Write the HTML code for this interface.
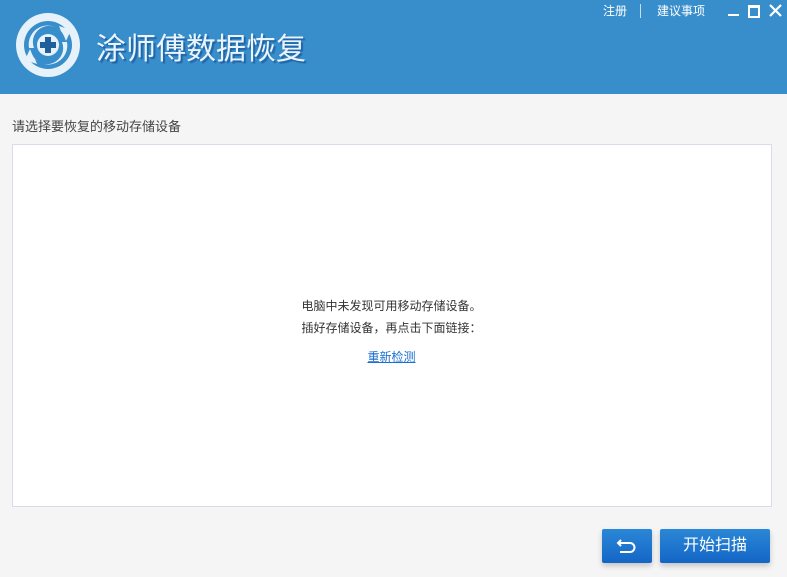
<!DOCTYPE html>
<html><head><meta charset="utf-8"><style>
body{margin:0;width:787px;height:577px;background:#f5f5f5;font-family:"Liberation Sans","Noto Sans CJK SC",sans-serif;position:relative;overflow:hidden}
.hd{position:absolute;left:0;top:0;width:787px;height:94px;background:#388dcb}
.t{position:absolute;left:96px;top:24px;font-size:30px;color:#eaf4fc;text-shadow:2px 2px 1px #2064a6;letter-spacing:0px}
.tr{position:absolute;top:2px;font-size:12px;color:#fff}
.lbl{position:absolute;left:12px;top:116px;font-size:13px;color:#444}
.panel{position:absolute;left:12px;top:144px;width:758px;height:361px;background:#fff;border:1px solid #d6dde8}
.msg{position:absolute;left:0;width:783px;text-align:center;font-size:12px;color:#333}
.btn{position:absolute;top:529px;height:34px;border-radius:2px;background:linear-gradient(#2a87d6,#1466c6);box-shadow:0 3px 6px rgba(0,0,0,.2);color:#fff}
</style></head><body>
<div class="hd">
<svg style="position:absolute;left:15px;top:12px" width="66" height="66" viewBox="0 0 66 66">
<circle cx="33" cy="33" r="32" fill="#e6f1fa"/>
<circle cx="33" cy="33" r="24" fill="#388dcb"/>
<path d="M14 36 A19 19 0 0 1 46 19 L44 14 L56 18 L51 29 L49 24 A14 14 0 0 0 19 36Z" fill="#e6f1fa"/>
<path d="M52 30 A19 19 0 0 1 20 47 L22 52 L10 48 L15 37 L17 42 A14 14 0 0 0 47 30Z" fill="#e6f1fa"/>
<circle cx="33" cy="33" r="11" fill="#e6f1fa"/>
<path d="M30 25h6v5h5v6h-5v5h-6v-5h-5v-6h5z" fill="#1f5f9c"/>
</svg>
<div class="t">涂师傅数据恢复</div>
<div class="tr" style="left:603px">注册</div>
<div style="position:absolute;left:640px;top:4px;width:1px;height:14px;background:#bfe0f5"></div>
<div class="tr" style="left:657px">建议事项</div>
<div style="position:absolute;left:728px;top:14px;width:11px;height:2px;background:#fff"></div>
<div style="position:absolute;left:748px;top:5px;width:8px;height:8px;border:2px solid #fff;border-top-width:3px"></div>
<svg style="position:absolute;left:769px;top:4px" width="13" height="13"><path d="M1 1L12 12M12 1L1 12" stroke="#fff" stroke-width="2.2"/></svg>
</div>
<div class="lbl">请选择要恢复的移动存储设备</div>
<div class="panel"></div>
<div class="msg" style="top:297px">电脑中未发现可用移动存储设备。</div>
<div class="msg" style="top:319px">插好存储设备，再点击下面链接：</div>
<div class="msg" style="top:348px;color:#1a6fd0;text-decoration:underline">重新检测</div>
<div class="btn" style="left:602px;width:50px">
<svg style="position:absolute;left:14px;top:8px" width="22" height="18"><path d="M5 3L2 6L5 9M2 6H14A4.5 4.5 0 0 1 14 15H4" fill="none" stroke="#fff" stroke-width="2"/></svg>
</div>
<div class="btn" style="left:660px;width:110px;text-align:center;line-height:34px;font-size:16px">开始扫描</div>
</body></html>
